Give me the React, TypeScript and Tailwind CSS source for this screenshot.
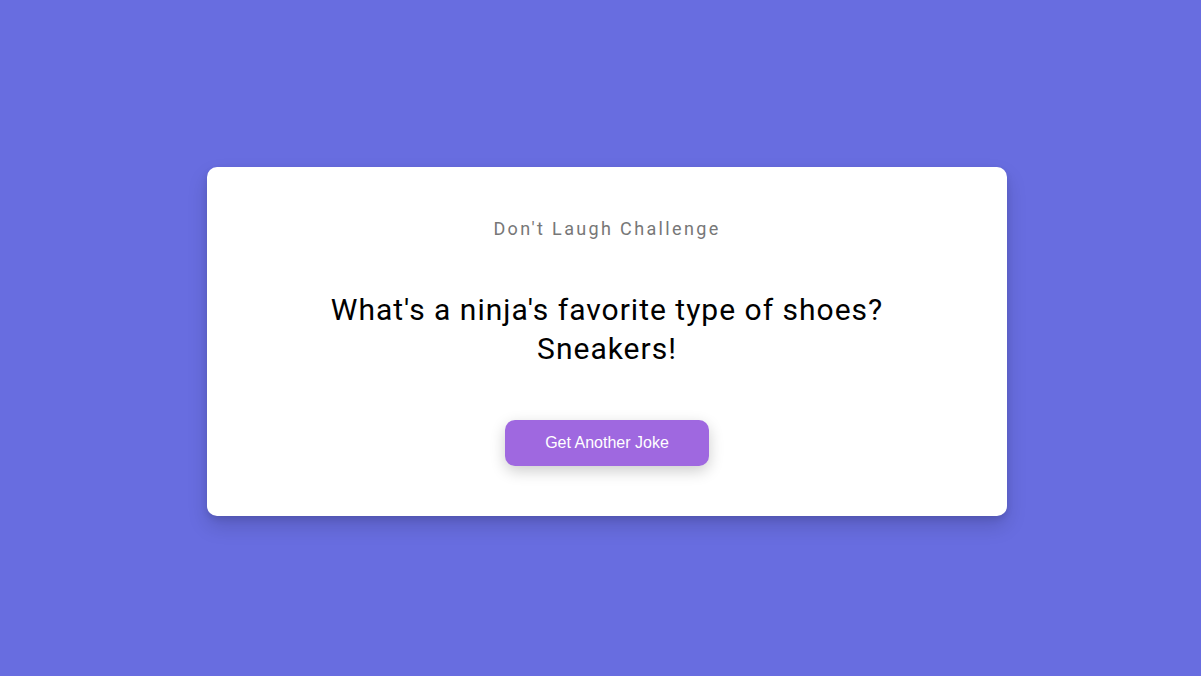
export default function App() {
  return (
    <div className="min-h-screen w-full bg-[#686de0] flex items-center justify-center pl-[13px] pt-[7px]" style={{ fontFamily: "Roboto, sans-serif" }}>
      <div className="w-[800px] bg-white rounded-[10px] shadow-[0_10px_20px_rgba(0,0,0,0.15),0_3px_6px_rgba(0,0,0,0.1)] pt-[48px] pb-[50px] px-[40px] flex flex-col items-center text-center">
        <h3 className="text-[18px] leading-[27px] tracking-[2.35px] text-[#777] mb-[48px]">Don't Laugh Challenge</h3>
        <div className="text-[30px] leading-[39px] tracking-[1px] text-black max-w-[600px] mb-[52px]">
          What's a ninja's favorite type of shoes? Sneakers!
        </div>
        <button
          className="bg-[#9f68e0] text-white rounded-[10px] px-[40px] py-[14px] text-[16px] leading-[18px] shadow-[0_5px_15px_rgba(0,0,0,0.2)]"
          style={{ fontFamily: "'Liberation Sans', Arial, sans-serif" }}
        >
          Get Another Joke
        </button>
      </div>
    </div>
  );
}
